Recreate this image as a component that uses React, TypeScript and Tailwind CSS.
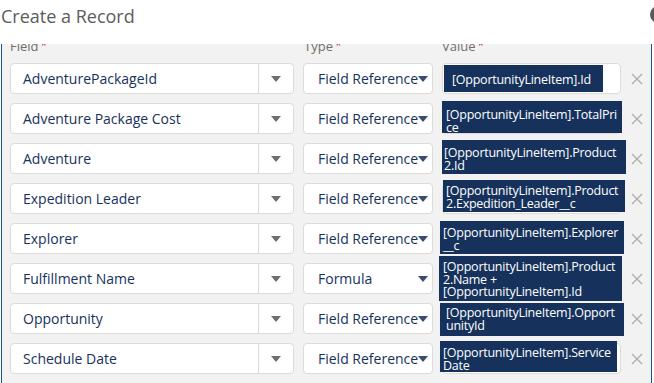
import React from "react";

type Row = {
  field: string;
  type: string;
  lines: string[];
  chip: string;
};

// chip offsets differ per row in the screenshot, so keep them as literal classes
const rows: Row[] = [
  {
    field: "AdventurePackageId",
    type: "Field Reference",
    lines: ["[OpportunityLineItem].Id"],
    chip: "left-[1px] top-[1px] w-[159px] h-[27px] pl-[8px] pt-[9px]",
  },
  {
    field: "Adventure Package Cost",
    type: "Field Reference",
    lines: ["[OpportunityLineItem].TotalPri", "ce"],
    chip: "left-[-1px] top-[-3px] w-[180px] h-[32px] pl-[4px] pt-[8px]",
  },
  {
    field: "Adventure",
    type: "Field Reference",
    lines: ["[OpportunityLineItem].Product", "2.Id"],
    chip: "left-[-1px] top-[-4px] w-[184px] h-[34px] pl-[2px] pt-[7px]",
  },
  {
    field: "Expedition Leader",
    type: "Field Reference",
    lines: ["[OpportunityLineItem].Product", "2.Expedition_Leader__c"],
    chip: "left-[0px] top-[-4px] w-[182px] h-[32px] pl-[3px] pt-[5px]",
  },
  {
    field: "Explorer",
    type: "Field Reference",
    lines: ["[OpportunityLineItem].Explorer", "__c"],
    chip: "left-[-3px] top-[-3px] w-[184px] h-[33px] pl-[3px] pt-[6px]",
  },
  {
    field: "Fulfillment Name",
    type: "Formula",
    lines: ["[OpportunityLineItem].Product", "2.Name +", "[OpportunityLineItem].Id"],
    chip: "left-[-4px] top-[-8px] w-[183px] h-[45px] pl-[4px] pt-[5px]",
  },
  {
    field: "Opportunity",
    type: "Field Reference",
    lines: ["[OpportunityLineItem].Opport", "unityId"],
    chip: "left-[-3px] top-[-1px] w-[184px] h-[33px] pl-[6px] pt-[4px]",
  },
  {
    field: "Schedule Date",
    type: "Field Reference",
    lines: ["[OpportunityLineItem].Service", "Date"],
    chip: "left-[-3px] top-[-3px] w-[177px] h-[31px] pl-[3px] pt-[6px]",
  },
];

const Caret = ({ color }: { color: string }) => (
  <svg width="10" height="6" viewBox="0 0 10 6">
    <path d="M0 0 L10 0 L5 6 Z" fill={color} />
  </svg>
);

const Label = ({ text, className }: { text: string; className: string }) => (
  <div className={`text-[13px] leading-[16px] text-[#706e6b] ${className}`}>
    {text}
    <span className="ml-[2px] text-[#c23934] text-[12px] align-top">*</span>
  </div>
);

export default function App() {
  return (
    <div className="relative w-[654px] h-[383px] overflow-hidden bg-white font-['Open_Sans',sans-serif]">
      <div className="h-[44px] pl-[1px] pt-[3px]">
        <h1 className="text-[18px] leading-[26px] text-[#5c5c5c]">Create a Record</h1>
      </div>
      <div className="absolute left-[650px] top-[6px] w-[17px] h-[17px] rounded-full bg-[#5a5a5a]" />

      <div className="ml-px w-[651px] h-[339px] overflow-hidden border-x border-[#1b5297] bg-[#f3f2f2]">
        <div className="flex h-[25px] pl-[8px] -mt-[6px]">
          <Label text="Field" className="w-[293px]" />
          <Label text="Type" className="w-[139px] pl-px" />
          <Label text="Value" className="" />
        </div>

        <div className="flex flex-col gap-[9px] pl-[8px]">
          {rows.map((row, i) => (
            <div key={i} className="flex items-center h-[31px]">
              <div className="flex w-[284px] h-[31px] rounded-[4px] border border-[#dddbda] bg-white">
                <div className="flex-1 flex items-center pl-[12px] text-[14px] text-[#16325c] whitespace-nowrap">
                  {row.field}
                </div>
                <div className="flex w-[35px] items-center justify-center border-l border-[#dddbda]">
                  <Caret color="#706e6b" />
                </div>
              </div>

              <div className="relative ml-[9px] flex w-[130px] h-[31px] items-center overflow-hidden rounded-[4px] border border-[#dddbda] bg-white pl-[14px] text-[14px] text-[#16325c] whitespace-nowrap">
                {row.type}
                <div className="absolute right-[4px] top-[12px] flex items-center bg-white">
                  <Caret color="#3b4d6e" />
                </div>
              </div>

              <div className="relative ml-[9px] w-[179px] h-[31px] rounded-[4px] border border-[#dddbda] bg-white">
                <div
                  className={`absolute bg-[#16325c] text-white text-[12.5px] leading-[12.5px] tracking-[-0.25px] overflow-hidden ${row.chip}`}
                >
                  {row.lines.map((l, j) => (
                    <div key={j} className="whitespace-nowrap">
                      {l}
                    </div>
                  ))}
                </div>
              </div>

              <div className="ml-[10px] flex w-[12px] items-center justify-center">
                <svg width="12" height="12" viewBox="0 0 12 12">
                  <path d="M1 1 L11 11 M11 1 L1 11" stroke="#b0adab" strokeWidth="1.4" />
                </svg>
              </div>
            </div>
          ))}
        </div>
      </div>
    </div>
  );
}
